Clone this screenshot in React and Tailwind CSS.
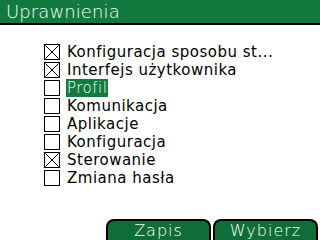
import React from "react";

const items = [
  { label: "Konfiguracja sposobu st...", checked: true },
  { label: "Interfejs użytkownika", checked: true },
  { label: "Profil", checked: false, selected: true },
  { label: "Komunikacja", checked: false },
  { label: "Aplikacje", checked: false },
  { label: "Konfiguracja", checked: false },
  { label: "Sterowanie", checked: true },
  { label: "Zmiana hasła", checked: false },
];

function Box({ checked }) {
  return (
    <div className="w-[16px] h-[16px] border border-black bg-white shrink-0 relative">
      {checked && (
        <svg viewBox="0 0 14 14" className="absolute inset-0 w-[14px] h-[14px]">
          <path d="M0.5 0.5 L13.5 13.5 M13.5 0.5 L0.5 13.5" stroke="black" strokeWidth="1" fill="none" />
        </svg>
      )}
    </div>
  );
}

export default function App() {
  return (
    <div className="w-[320px] h-[240px] bg-white flex flex-col overflow-hidden" style={{ fontFamily: '"DejaVu Sans", sans-serif' }}>
      <div className="h-[25px] bg-[#127a3e] border-b-2 border-black flex items-center pl-[6px] shrink-0">
        <span className="text-white text-[18px] leading-none tracking-[0.1px] font-extralight">Uprawnienia</span>
      </div>
      <div className="flex-1 flex flex-col pt-[18px] pl-[44px]">
        {items.map((it) => (
          <div key={it.label} className="h-[18px] flex items-center">
            <Box checked={it.checked} />
            <span
              className={
                "ml-[6px] text-[15px] leading-[18px] tracking-[0.5px] whitespace-nowrap px-[1px] " +
                (it.selected ? "bg-[#127a3e] text-white font-extralight" : "text-black")
              }
            >
              {it.label}
            </span>
          </div>
        ))}
      </div>
      <div className="h-[21px] flex justify-end gap-[2px] pr-[2px] shrink-0">
        <div className="w-[105px] bg-[#0f6e37] border-2 border-b-0 border-black rounded-t-[8px] flex items-center justify-center text-white text-[16px] leading-none tracking-[1px] font-extralight">
          Zapis
        </div>
        <div className="w-[105px] bg-[#0f6e37] border-2 border-b-0 border-black rounded-t-[8px] flex items-center justify-center text-white text-[16px] leading-none tracking-[1px] font-extralight">
          Wybierz
        </div>
      </div>
    </div>
  );
}
